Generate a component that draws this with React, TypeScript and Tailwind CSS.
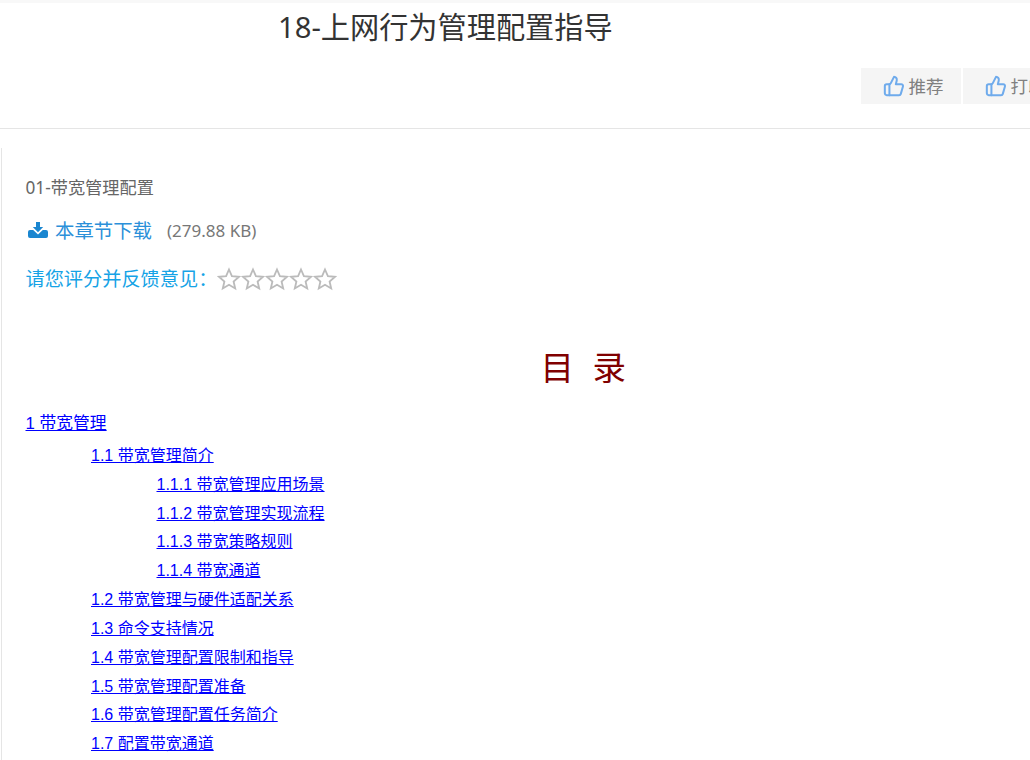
import { ThumbsUp } from "lucide-react";

const toc: [number, string][] = [
  [1, "1.1 带宽管理简介"],
  [2, "1.1.1 带宽管理应用场景"],
  [2, "1.1.2 带宽管理实现流程"],
  [2, "1.1.3 带宽策略规则"],
  [2, "1.1.4 带宽通道"],
  [1, "1.2 带宽管理与硬件适配关系"],
  [1, "1.3 命令支持情况"],
  [1, "1.4 带宽管理配置限制和指导"],
  [1, "1.5 带宽管理配置准备"],
  [1, "1.6 带宽管理配置任务简介"],
  [1, "1.7 配置带宽通道"],
];

const ui = "font-['Noto_Sans','Noto_Sans_CJK_SC',sans-serif]";
const tocFont = "font-['Liberation_Sans','Noto_Sans_CJK_SC',sans-serif]";

function Btn({ label }: { label: string }) {
  return (
    <div className="flex h-9 w-[100px] shrink-0 items-center justify-center gap-[4px] pl-[4px] bg-[#f5f5f5] text-[17.5px] text-[#808080]">
      <ThumbsUp size={22} strokeWidth={2.2} className="text-[#6fabec]" />
      <span>{label}</span>
    </div>
  );
}

function DownloadIcon() {
  return (
    <svg width="20" height="16" viewBox="0 0 20 16" className="ml-[2.5px] mt-[-3px] fill-[#1a86d0]">
      <path d="M8 0h4v5h3.200L10 10.200 4.800 5H8z" />
      <path d="M2 8h3.200l4.800 4.400L14.800 8H18a2 2 0 0 1 2 2v4a2 2 0 0 1-2 2H2a2 2 0 0 1-2-2v-4a2 2 0 0 1 2-2z" />
    </svg>
  );
}

function StarIcon() {
  return (
    <svg width="24" height="24" viewBox="0 0 24 24" className="fill-none stroke-[#bbbbbb]" strokeWidth="1.8">
      <path d="M12 2.500l2.900 6.600 7.100.7-5.400 4.700 1.600 7-6.200-3.700-6.200 3.700 1.600-7L2 9.800l7.100-.7z" />
    </svg>
  );
}

export default function App() {
  return (
    <div className={`h-[760px] w-[1030px] overflow-hidden bg-white ${ui}`}>
      <div className="h-[3px] bg-[#f8f8f8]" />
      <header className="h-[126px] border-b border-[#e5e5e5]">
        <h1 className="pl-[278px] pt-[5px] text-[29.2px] leading-[38px] font-normal whitespace-nowrap text-[#333]">
          18-上网行为管理配置指导
        </h1>
        <div className="mt-[22px] flex gap-[2px] pl-[861px]">
          <Btn label="推荐" />
          <Btn label="打印" />
        </div>
      </header>
      <main className="mt-[19px] ml-[1px] h-[700px] w-[1140px] border-l border-[#e5e5e5] pl-[23.5px]">
        <div className="pt-[28px] text-[17.2px] leading-[24px] text-[#666]">01-带宽管理配置</div>
        <div className="mt-[17px] flex h-[28px] items-center whitespace-nowrap">
          <DownloadIcon />
          <span className="ml-[7px] text-[19.4px] text-[#2b90d9]">本章节下载</span>
          <span className="ml-[15px] text-[17px] text-[#777]">(279.88 KB)</span>
        </div>
        <div className="mt-[20px] flex h-[28px] items-center whitespace-nowrap">
          <span className="text-[19.2px] text-[#16a3e6]">请您评分并反馈意见：</span>
          <div className="flex">
            {[0, 1, 2, 3, 4].map((i) => (
              <StarIcon key={i} />
            ))}
          </div>
        </div>
        <h2 className={`mt-[49px] text-center text-[33.5px] leading-[54px] font-normal text-[#800000] ${tocFont}`}>
          目&nbsp;&nbsp;录
        </h2>
        <div className={`mt-[14px] text-[16px] leading-[28.85px] text-[#0000ff] ${tocFont}`}>
          <div className="pb-[3px] text-[16.8px]">
            <a className="underline">1 带宽管理</a>
          </div>
          {toc.map(([level, text]) => (
            <div key={text} className={level === 1 ? "pl-[65.5px]" : "pl-[131px]"}>
              <a className="underline">{text}</a>
            </div>
          ))}
        </div>
      </main>
    </div>
  );
}
